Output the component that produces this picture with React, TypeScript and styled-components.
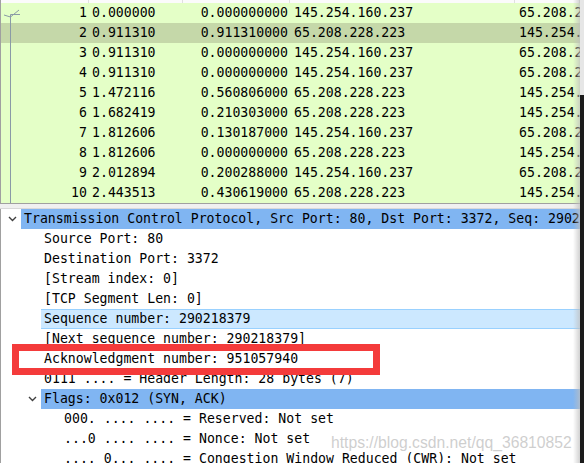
import styled, { createGlobalStyle } from 'styled-components';

const GlobalStyle = createGlobalStyle`
  html, body {
    margin: 0;
    padding: 0;
    background: #ffffff;
  }
  body {
    font-family: 'DejaVu Sans Mono', 'Liberation Mono', monospace;
  }
`;

const Screen = styled.div`
  position: relative;
  width: 584px;
  height: 463px;
  overflow: hidden;
  display: flex;
  background: #ffffff;
`;

const Main = styled.div`
  position: relative;
  flex: 1;
  display: flex;
  flex-direction: column;
  min-width: 0;
  overflow: hidden;
  font-family: 'DejaVu Sans Mono', 'Liberation Mono', monospace;
  font-size: 13.2px;
  color: #000;
`;

const EdgeShade = styled.div`
  position: absolute;
  top: 0;
  right: 0;
  bottom: 0;
  width: 7px;
  background: linear-gradient(to right, rgba(255, 255, 255, 0), rgba(190, 190, 190, 0.7));
  pointer-events: none;
`;

const RightEdge = styled.div`
  width: 4px;
  flex-shrink: 0;
  display: flex;
  flex-direction: column;

  .top {
    height: 95px;
    background: #e6e6e6;
  }
  .bottom {
    flex: 1;
    background: #1b1b1b;
  }
`;

const PacketList = styled.div`
  position: relative;
  flex-shrink: 0;
  border-left: 1px solid #a0a0a0;
  border-bottom: 1px solid #a0a0a0;
  background: #e4ffc7;
`;

const COLUMNS = '88px 94px 107px 225px 1fr';

const HeaderStrip = styled.div`
  display: grid;
  grid-template-columns: ${COLUMNS};
  height: 3px;
  background: #fbfbfb;

  span {
    border-right: 1px solid #e0e0e0;
  }
`;

const PacketRow = styled.div<{ $selected?: boolean }>`
  display: grid;
  grid-template-columns: ${COLUMNS};
  height: 20px;
  line-height: 20px;
  white-space: nowrap;
  background: ${(p) => (p.$selected ? '#c5d8a9' : '#e4ffc7')};
`;

const Cell = styled.span<{ $align?: 'left' | 'right' }>`
  overflow: hidden;
  text-align: ${(p) => p.$align ?? 'left'};
  padding: ${(p) => (p.$align === 'right' ? '0 2px 0 0' : '0 0 0 4px')};
`;

const NoCell = styled(Cell)`
  padding-right: 2px;
`;

const TimeCell = styled(Cell)`
  padding-left: 3px;
`;

const ConversationMark = styled.svg`
  position: absolute;
  left: 0;
  top: 0;
  pointer-events: none;
`;

const Splitter = styled.div`
  flex-shrink: 0;
  height: 4px;
  background: #f0f0f0;
  border-bottom: 1px solid #d9d9d9;
`;

const DetailTree = styled.div`
  flex: 1;
  min-height: 0;
  overflow: hidden;
  border-left: 1px solid #a0a0a0;
  background: #ffffff;
`;

type RowState = 'selected' | 'hover' | undefined;

const TreeRow = styled.div<{ $level: number; $state?: RowState }>`
  position: relative;
  height: 20px;
  line-height: 20px;
  white-space: nowrap;
  padding-left: ${(p) => 23 + p.$level * 20}px;

  .label {
    display: block;
    margin-left: -3px;
    padding-left: 3px;
    box-sizing: border-box;
    height: 20px;
    background: ${(p) =>
      p.$state === 'selected' ? '#80b5f2' : p.$state === 'hover' ? '#cce8ff' : 'transparent'};
    border-top: ${(p) => (p.$state === 'hover' ? '1px solid #99d1ff' : 'none')};
    border-bottom: ${(p) => (p.$state === 'hover' ? '1px solid #99d1ff' : 'none')};
    line-height: ${(p) => (p.$state === 'hover' ? '18px' : '20px')};
  }
`;

const Chevron = styled.svg<{ $level: number }>`
  position: absolute;
  top: 7px;
  left: ${(p) => 7 + p.$level * 20}px;
`;

const RedBox = styled.div`
  position: absolute;
  left: 12px;
  top: 344px;
  width: 368px;
  height: 31px;
  box-sizing: border-box;
  border: 7px solid #f43b3b;
  pointer-events: none;
`;

const Watermark = styled.div`
  position: absolute;
  left: 331px;
  top: 434px;
  font-family: 'Liberation Sans', Arial, sans-serif;
  font-size: 15.7px;
  color: rgba(190, 190, 190, 0.75);
  pointer-events: none;
  white-space: nowrap;
`;

const packets = [
  ['1', '0.000000', '0.000000000', '145.254.160.237', '65.208.228.223'],
  ['2', '0.911310', '0.911310000', '65.208.228.223', '145.254.160.237'],
  ['3', '0.911310', '0.000000000', '145.254.160.237', '65.208.228.223'],
  ['4', '0.911310', '0.000000000', '145.254.160.237', '65.208.228.223'],
  ['5', '1.472116', '0.560806000', '65.208.228.223', '145.254.160.237'],
  ['6', '1.682419', '0.210303000', '65.208.228.223', '145.254.160.237'],
  ['7', '1.812606', '0.130187000', '145.254.160.237', '65.208.228.223'],
  ['8', '1.812606', '0.000000000', '65.208.228.223', '145.254.160.237'],
  ['9', '2.012894', '0.200288000', '145.254.160.237', '65.208.228.223'],
  ['10', '2.443513', '0.430619000', '65.208.228.223', '145.254.160.237'],
];

type TreeItem = { text: string; level: number; open?: boolean; state?: RowState };

const tree: TreeItem[] = [
  {
    text: 'Transmission Control Protocol, Src Port: 80, Dst Port: 3372, Seq: 290218379, Ack: 951057940, Len: 0',
    level: 0,
    open: true,
    state: 'selected',
  },
  { text: 'Source Port: 80', level: 1 },
  { text: 'Destination Port: 3372', level: 1 },
  { text: '[Stream index: 0]', level: 1 },
  { text: '[TCP Segment Len: 0]', level: 1 },
  { text: 'Sequence number: 290218379', level: 1, state: 'hover' },
  { text: '[Next sequence number: 290218379]', level: 1 },
  { text: 'Acknowledgment number: 951057940', level: 1 },
  { text: '0111 .... = Header Length: 28 bytes (7)', level: 1 },
  { text: 'Flags: 0x012 (SYN, ACK)', level: 1, open: true, state: 'selected' },
  { text: '000. .... .... = Reserved: Not set', level: 2 },
  { text: '...0 .... .... = Nonce: Not set', level: 2 },
  { text: '.... 0... .... = Congestion Window Reduced (CWR): Not set', level: 2 },
];

const App = () => {
  return (
    <Screen>
      <GlobalStyle />
      <Main>
        <PacketList>
          <HeaderStrip>
            <span />
            <span />
            <span />
            <span />
            <span />
          </HeaderStrip>
          {packets.map((p, i) => (
            <PacketRow key={p[0]} $selected={i === 1}>
              <NoCell $align="right">{p[0]}</NoCell>
              <TimeCell>{p[1]}</TimeCell>
              <Cell $align="right">{p[2]}</Cell>
              <Cell>{p[3]}</Cell>
              <Cell>{p[4]}</Cell>
            </PacketRow>
          ))}
          <ConversationMark width="24" height="203" viewBox="0 0 24 203">
            <path d="M3 15 L9.5 17 L18 10" fill="none" stroke="#8a9aa6" strokeWidth="1" />
            <path d="M9.5 14.5 H19" fill="none" stroke="#8a9aa6" strokeWidth="1" />
            <path d="M9.5 14.5 V203" fill="none" stroke="#8a9aa6" strokeWidth="1" />
          </ConversationMark>
        </PacketList>
        <Splitter />
        <DetailTree>
          {tree.map((item, i) => (
            <TreeRow key={i} $level={item.level} $state={item.state}>
              {item.open && (
                <Chevron $level={item.level} width="9" height="6" viewBox="0 0 9 6">
                  <path d="M1 1 L4.5 4.5 L8 1" fill="none" stroke="#404040" strokeWidth="1.4" />
                </Chevron>
              )}
              <span className="label">{item.text}</span>
            </TreeRow>
          ))}
        </DetailTree>
        <EdgeShade />
        <RedBox />
        <Watermark>https://blog.csdn.net/qq_36810852</Watermark>
      </Main>
      <RightEdge>
        <div className="top" />
        <div className="bottom" />
      </RightEdge>
    </Screen>
  );
};

export default App;
